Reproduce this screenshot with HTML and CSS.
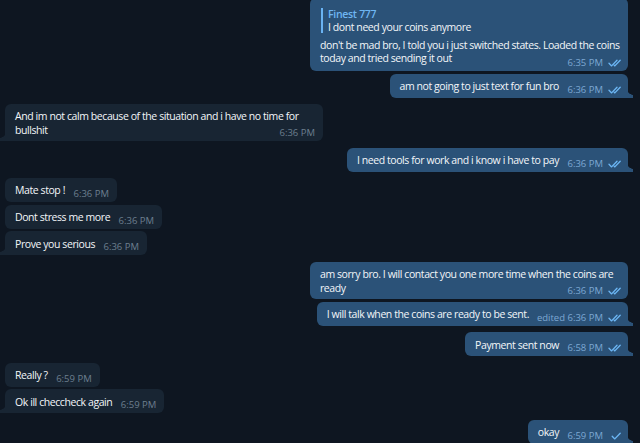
FILE: index.html
```html
<!DOCTYPE html>
<html>
<head>
<meta charset="utf-8">
<link rel="stylesheet" href="styles.css">
</head>
<body>
<div class="chat">
  <div class="msg out first">
    <div class="reply">
      <div class="reply-name">Finest 777</div>
      <div class="reply-text">I dont need your coins anymore</div>
    </div>
    <div class="txt">don't be mad bro, I told you i just switched states. Loaded the coins today and tried sending it out<span class="sp"></span></div>
    <span class="meta"><span>6:35 PM</span><svg class="chk" viewBox="0 0 15 8"><path d="M1 4.3l2.6 2.6L9 1.2M6.2 6.3l0.6 0.6L12.2 1.2"/></svg></span>
  </div>
  <div class="msg out tail">
    <div class="txt">am not going to just text for fun bro<span class="sp"></span></div>
    <span class="meta"><span>6:36 PM</span><svg class="chk" viewBox="0 0 15 8"><path d="M1 4.3l2.6 2.6L9 1.2M6.2 6.3l0.6 0.6L12.2 1.2"/></svg></span>
  </div>

  <div class="msg in tail gs">
    <div class="txt">And im not calm because of the situation and i have no time for bullshit<span class="sp"></span></div>
    <span class="meta"><span>6:36 PM</span></span>
  </div>

  <div class="msg out tail gs">
    <div class="txt">I need tools for work and i know i have to pay<span class="sp"></span></div>
    <span class="meta"><span>6:36 PM</span><svg class="chk" viewBox="0 0 15 8"><path d="M1 4.3l2.6 2.6L9 1.2M6.2 6.3l0.6 0.6L12.2 1.2"/></svg></span>
  </div>

  <div class="msg in gs">
    <div class="txt">Mate stop !<span class="sp"></span></div>
    <span class="meta"><span>6:36 PM</span></span>
  </div>
  <div class="msg in">
    <div class="txt">Dont stress me more<span class="sp"></span></div>
    <span class="meta"><span>6:36 PM</span></span>
  </div>
  <div class="msg in tail">
    <div class="txt">Prove you serious<span class="sp"></span></div>
    <span class="meta"><span>6:36 PM</span></span>
  </div>

  <div class="msg out gs">
    <div class="txt">am sorry bro. I will contact you one more time when the coins are ready<span class="sp"></span></div>
    <span class="meta"><span>6:36 PM</span><svg class="chk" viewBox="0 0 15 8"><path d="M1 4.3l2.6 2.6L9 1.2M6.2 6.3l0.6 0.6L12.2 1.2"/></svg></span>
  </div>
  <div class="msg out tail">
    <div class="txt">I will talk when the coins are ready to be sent.<span class="sp ed"></span></div>
    <span class="meta"><span>edited 6:36 PM</span><svg class="chk" viewBox="0 0 15 8"><path d="M1 4.3l2.6 2.6L9 1.2M6.2 6.3l0.6 0.6L12.2 1.2"/></svg></span>
  </div>

  <div class="msg out tail gs">
    <div class="txt">Payment sent now<span class="sp"></span></div>
    <span class="meta"><span>6:58 PM</span><svg class="chk" viewBox="0 0 15 8"><path d="M1 4.3l2.6 2.6L9 1.2M6.2 6.3l0.6 0.6L12.2 1.2"/></svg></span>
  </div>

  <div class="msg in gs">
    <div class="txt">Really ?<span class="sp"></span></div>
    <span class="meta"><span>6:59 PM</span></span>
  </div>
  <div class="msg in tail">
    <div class="txt">Ok ill checcheck again<span class="sp"></span></div>
    <span class="meta"><span>6:59 PM</span></span>
  </div>

  <div class="msg out tail gs">
    <div class="txt">okay<span class="sp"></span></div>
    <span class="meta"><span>6:59 PM</span><svg class="chk" viewBox="0 0 15 8"><path d="M4.2 4.3l2.6 2.6L12.2 1.2"/></svg></span>
  </div>
</div>
</body>
</html>
```
FILE: styles.css
```css
html, body {
  margin: 0;
  padding: 0;
}
body {
  background: #0e1621;
  width: 640px;
  height: 443px;
  overflow: hidden;
  font-family: "Open Sans", "Noto Sans", sans-serif;
}
.chat {
  display: flex;
  flex-direction: column;
  padding: 0 12px 0 5px;
  margin-top: -2.25px;
}
.msg {
  position: relative;
  max-width: 318px;
  box-sizing: border-box;
  border-radius: 6px;
  padding: 6.25px 8px 4.25px 10px;
  font-size: 10.5px;
  letter-spacing: -0.42px;
  line-height: 13.5px;
  color: #f3f6f9;
  margin-top: 2.67px;
}
.msg.first {
  margin-top: 0;
  padding-top: 5.25px;
  padding-bottom: 5.25px;
}
.msg.gs { margin-top: 6.33px; }
.out {
  align-self: flex-end;
  background: #2b5278;
  padding-right: 5px;
}
.in {
  align-self: flex-start;
  background: #182533;
}
.tail.out { border-bottom-right-radius: 0; }
.tail.in { border-bottom-left-radius: 0; }
.tail.out::after {
  content: "";
  position: absolute;
  right: -5px;
  bottom: 0;
  width: 5px;
  height: 9px;
  background: radial-gradient(circle at 100% 0, transparent 5.5px, #2b5278 6px);
}
.tail.in::before {
  content: "";
  position: absolute;
  left: -5px;
  bottom: 0;
  width: 5px;
  height: 9px;
  background: radial-gradient(circle at 0 0, transparent 5.5px, #182533 6px);
}
.reply {
  margin: 5px 0 5.75px 1px;
  border-left: 2px solid #6ab3f3;
  padding-left: 5px;
  line-height: 12.5px;
}
.reply-name {
  color: #6fb6f3;
  font-weight: 600;
  letter-spacing: -0.3px;
}
.sp {
  display: inline-block;
  width: 64px;
  height: 1px;
}
.in .sp { width: 44px; }
.sp.ed { width: 94px; }
.meta {
  position: absolute;
  right: 5px;
  bottom: 2px;
  display: flex;
  align-items: center;
  gap: 5px;
  font-size: 9.5px;
  letter-spacing: 0;
  line-height: 12px;
  color: #7da8d3;
  white-space: nowrap;
}
.in .meta {
  right: 8px;
  color: #6d7f8f;
}
.chk {
  width: 15px;
  height: 8px;
  fill: none;
  stroke: #6cb6f4;
  stroke-width: 1.35;
  stroke-linecap: round;
  stroke-linejoin: round;
}
```
